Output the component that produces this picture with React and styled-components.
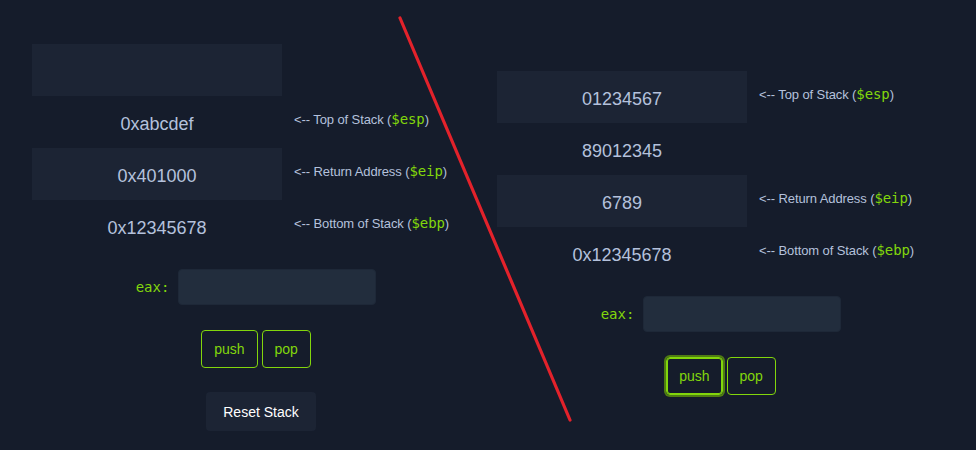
import React from 'react';
import styled, { createGlobalStyle } from 'styled-components';

const GlobalStyle = createGlobalStyle`
  html, body {
    margin: 0;
    padding: 0;
    background: #151c2b;
  }
  body {
    font-family: "Liberation Sans", Arial, sans-serif;
  }
`;

const leftRows = [
  { value: '', filled: true },
  { value: '0xabcdef', label: 'Top of Stack', reg: '$esp' },
  { value: '0x401000', filled: true, label: 'Return Address', reg: '$eip' },
  { value: '0x12345678', label: 'Bottom of Stack', reg: '$ebp' },
];

const rightRows = [
  { value: '01234567', filled: true, label: 'Top of Stack', reg: '$esp' },
  { value: '89012345' },
  { value: '6789', filled: true, label: 'Return Address', reg: '$eip' },
  { value: '0x12345678', label: 'Bottom of Stack', reg: '$ebp' },
];

function StackPanel({ rows, top, focused, showReset }) {
  return (
    <Panel top={top}>
      <Stack>
        {rows.map((row, i) => (
          <Row key={i}>
            <Cell filled={row.filled}>{row.value}</Cell>
            {row.label && (
              <Label>
                &lt;-- {row.label} (<Reg>{row.reg}</Reg>)
              </Label>
            )}
          </Row>
        ))}
      </Stack>
      <EaxRow>
        <EaxLabel>eax:</EaxLabel>
        <EaxInput />
      </EaxRow>
      <Buttons>
        <OpButton focused={focused}>push</OpButton>
        <OpButton>pop</OpButton>
      </Buttons>
      {showReset && <ResetButton>Reset Stack</ResetButton>}
    </Panel>
  );
}

export default function App() {
  return (
    <>
      <GlobalStyle />
      <Page>
        <StackPanel rows={leftRows} top={44} showReset />
        <StackPanel rows={rightRows} top={71} focused />
        <Slash width="976" height="450" viewBox="0 0 976 450">
          <line x1="400" y1="18" x2="570" y2="420" stroke="#e3222b" strokeWidth="3.2" strokeLinecap="round" />
        </Slash>
      </Page>
    </>
  );
}

const Page = styled.div`
  position: relative;
  display: flex;
  align-items: flex-start;
  gap: 17px;
  padding-left: 32px;
  width: 976px;
  height: 450px;
  box-sizing: border-box;
  overflow: hidden;
`;

const Panel = styled.section`
  width: 448px;
  padding-top: ${({ top }) => top}px;
  display: flex;
  flex-direction: column;
  align-items: center;
`;

const Stack = styled.div`
  align-self: stretch;
  display: flex;
  flex-direction: column;
`;

const Row = styled.div`
  display: grid;
  grid-template-columns: 250px auto;
  column-gap: 12px;
  align-items: center;
  height: 52px;
`;

const Cell = styled.div`
  height: 52px;
  box-sizing: border-box;
  padding-top: 4px;
  display: flex;
  align-items: center;
  justify-content: center;
  background: ${({ filled }) => (filled ? '#1c2434' : 'transparent')};
  color: #b4c1dc;
  font-size: 18px;
`;

const Label = styled.div`
  color: #b4c1dc;
  font-size: 13px;
  margin-top: -6px;
  white-space: nowrap;
  letter-spacing: -0.1px;
`;

const Reg = styled.span`
  font-family: "DejaVu Sans Mono", "Liberation Mono", monospace;
  font-size: 14px;
  color: #82d60c;
`;

const EaxRow = styled.div`
  display: flex;
  align-items: center;
  gap: 9px;
  margin-top: 17px;
`;

const EaxLabel = styled.span`
  font-family: "DejaVu Sans Mono", "Liberation Mono", monospace;
  font-size: 14px;
  color: #82d60c;
`;

const EaxInput = styled.div`
  width: 196px;
  height: 34px;
  background: #222d3d;
  border: 1px solid #1e2838;
  border-radius: 4px;
`;

const Buttons = styled.div`
  display: flex;
  gap: 4px;
  margin-top: 25px;
  align-items: center;
`;

const OpButton = styled.button`
  height: 38px;
  padding: 0 12px;
  background: transparent;
  color: #82d60c;
  font-family: "Liberation Sans", Arial, sans-serif;
  font-size: 14px;
  border: 1px solid #82d60c;
  border-radius: 4px;
  box-shadow: ${({ focused }) => (focused ? '0 0 0 2px #4f7d12, inset 0 0 0 1px #82d60c' : 'none')};
`;

const ResetButton = styled.button`
  margin-top: 24px;
  margin-left: 10px;
  width: 110px;
  height: 39px;
  background: #1c2434;
  color: #ffffff;
  font-family: "Liberation Sans", Arial, sans-serif;
  font-size: 14px;
  border: none;
  border-radius: 4px;
`;

const Slash = styled.svg`
  position: absolute;
  left: 0;
  top: 0;
  pointer-events: none;
`;
